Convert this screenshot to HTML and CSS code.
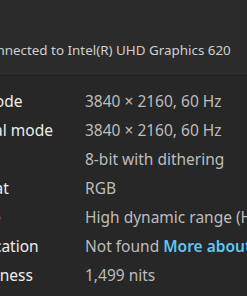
FILE: index.html
```html
<!DOCTYPE html>
<html lang="en">
  <head>
    <meta charset="UTF-8">
    <meta name="viewport" content="width=device-width, initial-scale=1.0">
    <title>Advanced display</title>
    <link rel="stylesheet" href="styles.css">
  </head>
  <body>
    <div class="panel">
      <div class="header">
        <p class="adapter">Display 1: Connected to Intel(R) UHD Graphics 620</p>
      </div>

      <div class="info">
        <div class="row">
          <span class="label">Desktop mode</span>
          <span class="value">3840 × 2160, 60 Hz</span>
        </div>
        <div class="row">
          <span class="label">Active signal mode</span>
          <span class="value">3840 × 2160, 60 Hz</span>
        </div>
        <div class="row">
          <span class="label">Bit depth</span>
          <span class="value">8-bit with dithering</span>
        </div>
        <div class="row">
          <span class="label">Color format</span>
          <span class="value">RGB</span>
        </div>
        <div class="row">
          <span class="label">Color space</span>
          <span class="value">High dynamic range (HDR)</span>
        </div>
        <div class="row">
          <span class="label">HDR certification</span>
          <span class="value">Not found <a class="link" href="#">More about HDR certification</a></span>
        </div>
        <div class="row">
          <span class="label">Peak brightness</span>
          <span class="value">1,499 nits</span>
        </div>
      </div>
    </div>
  </body>
</html>
```

FILE: styles.css
```css
body {
  background: #272727;
  font-family: 'Noto Sans', 'Open Sans', sans-serif;
  margin: 0;
  overflow: hidden;
  width: 247px;
  height: 296px;
}
.panel {
  margin-left: -84px;
  width: 600px;
}
.header {
  background: #2b2b2b;
  height: 76px;
  border-bottom: 1px solid #1d1d1d;
  box-sizing: border-box;
  padding-top: 40px;
}
.adapter {
  margin: 0;
  font-size: 13.4px;
  line-height: 20px;
  color: #cfcfcf;
  white-space: nowrap;
}
.info {
  padding-top: 11px;
}
.row {
  display: grid;
  grid-template-columns: 169px 1fr;
  height: 29px;
  line-height: 29px;
  font-size: 15.5px;
  white-space: nowrap;
}
.label {
  color: #ededed;
}
.value {
  color: #bdbdbd;
}
.link {
  color: #5cc8f5;
  font-weight: 600;
  text-decoration: none;
}
```
